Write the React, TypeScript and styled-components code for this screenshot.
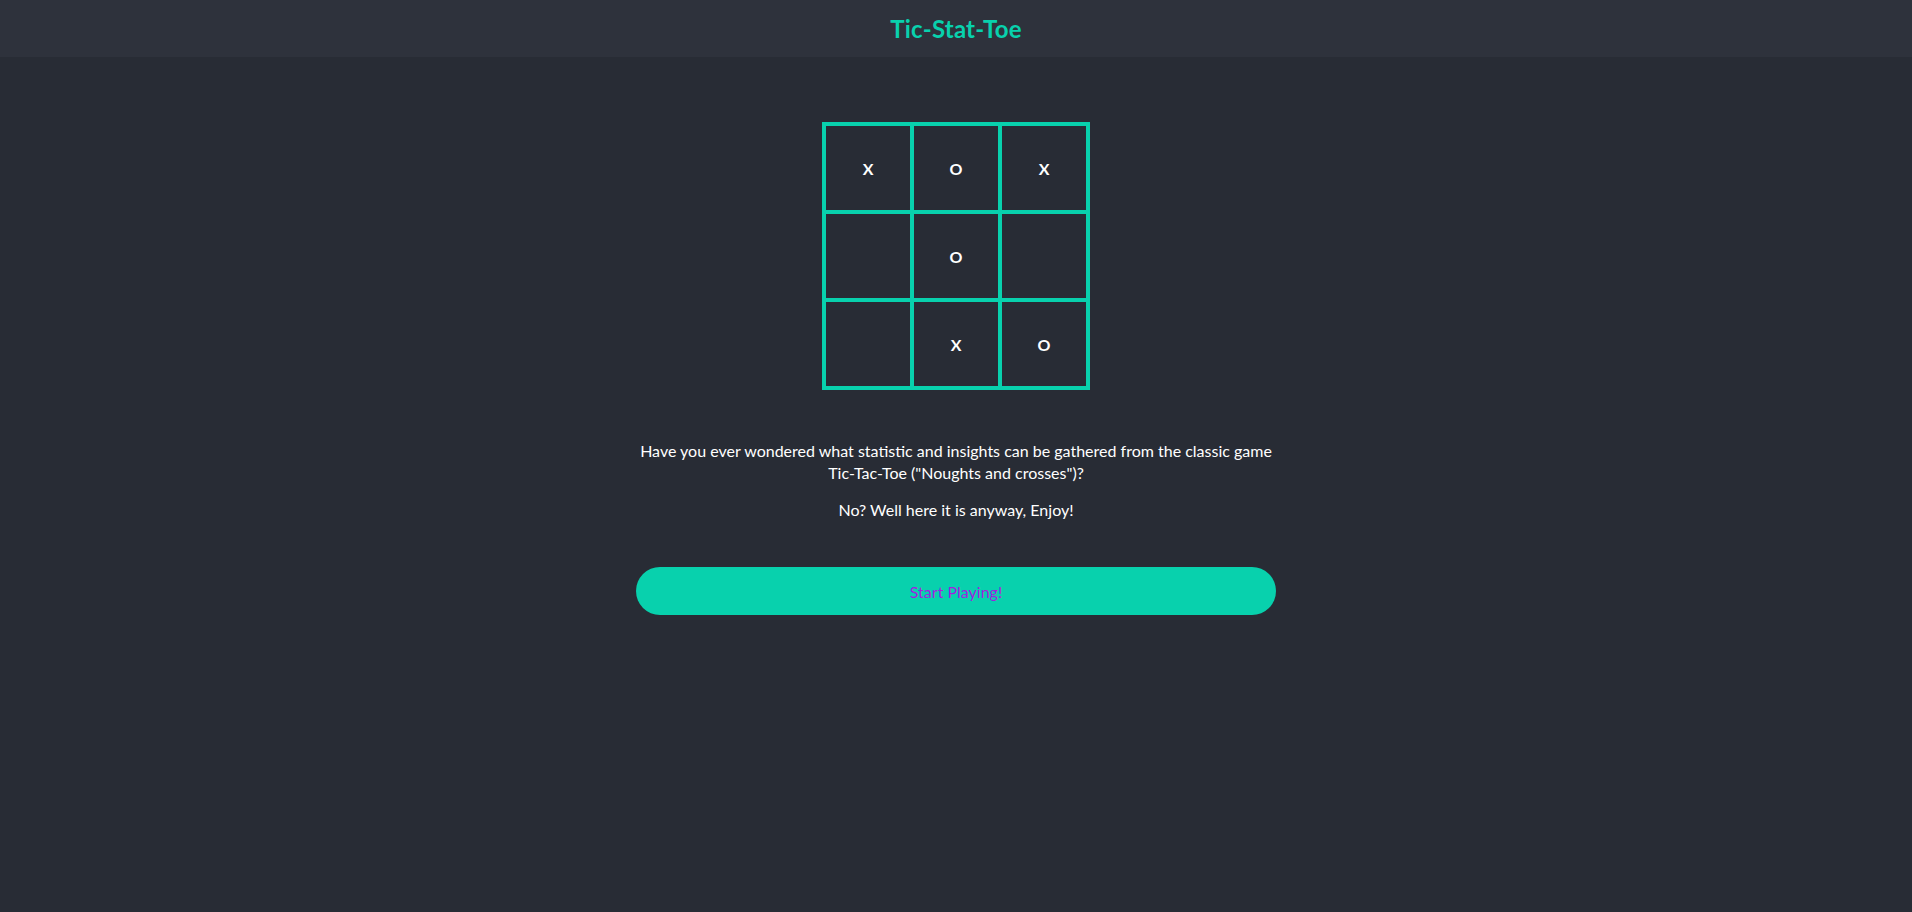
import React from "react";
import styled, { createGlobalStyle } from "styled-components";

const GlobalStyle = createGlobalStyle`
  html, body {
    margin: 0;
    padding: 0;
    background: #282c35;
  }
  body {
    font-family: Lato, "Open Sans", "Noto Sans", sans-serif;
    color: #ffffff;
  }
`;

const Page = styled.div`
  min-height: 912px;
  background: #282c35;
  display: flex;
  flex-direction: column;
`;

const Header = styled.header`
  height: 57px;
  background: #2e323c;
  display: flex;
  align-items: center;
  justify-content: center;
`;

const Title = styled.h1`
  margin: 0;
  font-size: 24px;
  font-weight: 700;
  color: #08d1ad;
  letter-spacing: 0.2px;
`;

const Main = styled.main`
  display: flex;
  flex-direction: column;
  align-items: center;
  padding-top: 65px;
`;

const Board = styled.div`
  display: grid;
  grid-template-columns: repeat(3, 88px);
  grid-template-rows: repeat(3, 88px);
  border: 2px solid #08d1ad;
`;

const Cell = styled.div`
  border: 2px solid #08d1ad;
  display: flex;
  align-items: center;
  justify-content: center;
  font-size: 16px;
  font-weight: 700;
  color: #ffffff;
`;

const Intro = styled.section`
  width: 640px;
  margin-top: 50px;
  text-align: center;
  font-size: 16px;
  line-height: 22px;
`;

const Para = styled.p`
  margin: 0 0 15px;
`;

const NoWrap = styled.span`
  white-space: nowrap;
`;

const StartButton = styled.button`
  margin-top: 31px;
  width: 640px;
  height: 48px;
  border: none;
  border-radius: 24px;
  background: #08d1ad;
  color: #a01fe0;
  font-family: Lato, "Open Sans", sans-serif;
  font-size: 16px;
  cursor: pointer;
`;

const cells = ["X", "O", "X", "", "O", "", "", "X", "O"];

export default function App() {
  return (
    <>
      <GlobalStyle />
      <Page>
        <Header>
          <Title>Tic-Stat-Toe</Title>
        </Header>
        <Main>
          <Board>
            {cells.map((c, i) => (
              <Cell key={i}>{c}</Cell>
            ))}
          </Board>
          <Intro>
            <Para>
              Have you ever wondered what statistic and insights can be gathered from the classic game{" "}
              <NoWrap>Tic-Tac-Toe</NoWrap> ("Noughts and crosses")?
            </Para>
            <Para>No? Well here it is anyway, Enjoy!</Para>
          </Intro>
          <StartButton>Start Playing!</StartButton>
        </Main>
      </Page>
    </>
  );
}
